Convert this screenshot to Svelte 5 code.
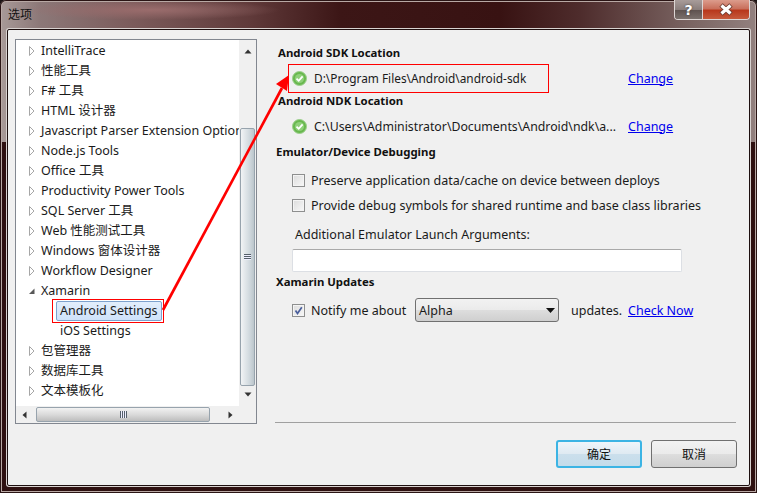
<script lang="ts">
  const treeItems = [
    { label: "IntelliTrace", arrow: "closed" },
    { label: "性能工具", arrow: "closed" },
    { label: "F# 工具", arrow: "closed" },
    { label: "HTML 设计器", arrow: "closed" },
    { label: "Javascript Parser Extension Options", arrow: "closed" },
    { label: "Node.js Tools", arrow: "closed" },
    { label: "Office 工具", arrow: "closed" },
    { label: "Productivity Power Tools", arrow: "closed" },
    { label: "SQL Server 工具", arrow: "closed" },
    { label: "Web 性能测试工具", arrow: "closed" },
    { label: "Windows 窗体设计器", arrow: "closed" },
    { label: "Workflow Designer", arrow: "closed" },
    { label: "Xamarin", arrow: "open" },
    { label: "Android Settings", arrow: "none", child: true, selected: true },
    { label: "iOS Settings", arrow: "none", child: true },
    { label: "包管理器", arrow: "closed" },
    { label: "数据库工具", arrow: "closed" },
    { label: "文本模板化", arrow: "closed" },
  ];
</script>

<div class="window">
  <header class="titlebar">
    <span class="title">选项</span>
    <div class="caption">
      <span class="cap help">?</span>
      <span class="cap close">
        <svg width="16" height="13" viewBox="0 0 16 13">
          <path d="M3 2 13 11M13 2 3 11" fill="none" stroke="#6b3a30" stroke-width="5" />
          <path d="M3.5 2.5 12.5 10.5M12.5 2.5 3.5 10.5" fill="none" stroke="#fff" stroke-width="3.2" />
        </svg>
      </span>
    </div>
  </header>

  <main class="panel">
    <div class="top">
      <div class="tree">
        <div class="tree-body">
          <ul class="rows">
            {#each treeItems as item}
              <li class="row" class:child={item.child}>
                {#if item.arrow === "closed"}
                  <svg class="arrow" width="7" height="10" viewBox="0 0 7 10"><path d="M1.5.5 6 5 1.5 9.5Z" fill="#fff" stroke="#a6a6a6" /></svg>
                {:else if item.arrow === "open"}
                  <svg class="arrow" width="7" height="10" viewBox="0 0 7 10"><path d="M6.5 2.5V8H1Z" fill="#595959" /></svg>
                {/if}
                <span class="label" class:selected={item.selected}>{item.label}</span>
              </li>
            {/each}
          </ul>
          <div class="vscroll">
            <span class="sb-btn"><svg width="8" height="5" viewBox="0 0 8 5"><path d="M4 .5 7.5 4.5H.5Z" fill="#333" /></svg></span>
            <div class="v-track"><div class="v-thumb"><span class="v-grip"></span></div></div>
            <span class="sb-btn"><svg width="8" height="5" viewBox="0 0 8 5"><path d="M.5.5H7.5L4 4.5Z" fill="#333" /></svg></span>
          </div>
        </div>
        <div class="hscroll">
          <span class="sb-btn"><svg width="5" height="8" viewBox="0 0 5 8"><path d="M4.5.5V7.5L.5 4Z" fill="#333" /></svg></span>
          <div class="h-track"><div class="h-thumb"><span class="h-grip"></span></div></div>
          <span class="sb-btn"><svg width="5" height="8" viewBox="0 0 5 8"><path d="M.5.5 4.5 4 .5 7.5Z" fill="#333" /></svg></span>
        </div>
      </div>

      <section class="settings">
        <h2 class="head sdk">Android SDK Location</h2>
        <div class="path-row">
          <svg class="ok" width="15" height="15" viewBox="0 0 15 15">
            <circle cx="7.5" cy="7.5" r="7" fill="#68b84e" stroke="#9ccf8c" />
            <circle cx="7.5" cy="7.5" r="4.6" fill="#8fd07a" />
            <path d="M4.5 7.6 6.7 9.8 10.6 5.4" fill="none" stroke="#fff" stroke-width="1.8" />
          </svg>
          <span class="path sdk-path">D:\Program Files\Android\android-sdk</span>
          <a class="link" href="#sdk">Change</a>
        </div>
        <h2 class="head sdk">Android NDK Location</h2>
        <div class="path-row">
          <svg class="ok" width="15" height="15" viewBox="0 0 15 15">
            <circle cx="7.5" cy="7.5" r="7" fill="#68b84e" stroke="#9ccf8c" />
            <circle cx="7.5" cy="7.5" r="4.6" fill="#8fd07a" />
            <path d="M4.5 7.6 6.7 9.8 10.6 5.4" fill="none" stroke="#fff" stroke-width="1.8" />
          </svg>
          <span class="path">C:\Users\Administrator\Documents\Android\ndk\a...</span>
          <a class="link" href="#ndk">Change</a>
        </div>
        <h2 class="head emulator">Emulator/Device Debugging</h2>
        <div class="check-row first"><span class="box"></span>Preserve application data/cache on device between deploys</div>
        <div class="check-row"><span class="box"></span>Provide debug symbols for shared runtime and base class libraries</div>
        <div class="args-label">Additional Emulator Launch Arguments:</div>
        <div class="args-input"></div>
        <h2 class="head updates">Xamarin Updates</h2>
        <div class="notify">
          <span class="box checked">
            <svg width="9" height="9" viewBox="0 0 9 9"><path d="M1.5 4.5 3.5 7.5 7.8 1.2" fill="none" stroke="#4a5f9c" stroke-width="1.7" /></svg>
          </span>
          <span class="notify-label">Notify me about</span>
          <div class="select">
            <span>Alpha</span>
            <svg width="9" height="5" viewBox="0 0 9 5"><path d="M0 0H9L4.5 5Z" fill="#111" /></svg>
          </div>
          <span class="updates-label">updates.</span>
          <a class="link" href="#check">Check Now</a>
        </div>
      </section>
    </div>

    <footer class="footer">
      <div class="actions">
        <button class="btn primary">确定</button>
        <button class="btn">取消</button>
      </div>
    </footer>
  </main>

  <!-- red annotations drawn on top of the screenshot -->
  <div class="mark mark-sdk"></div>
  <div class="mark mark-tree"></div>
  <svg class="pointer" width="757" height="493" viewBox="0 0 757 493">
    <path d="M163 310 282 88" fill="none" stroke="#f00" stroke-width="2.7" />
    <path d="M289 75 276 84 287 91Z" fill="#f00" />
  </svg>
</div>

<style>
  :global(body) {
    margin: 0;
    background: #1c1414;
  }

  .window {
    position: relative;
    display: flex;
    flex-direction: column;
    width: 757px;
    height: 493px;
    box-sizing: border-box;
    padding: 0 7px 7px;
    overflow: hidden;
    border-radius: 6px 6px 0 0;
    box-shadow: inset 0 0 0 1px #2a1414, inset 0 0 0 2px #b8a8a4;
    background:
      linear-gradient(transparent 142px, #2e1010 142px),
      radial-gradient(ellipse 130px 10px at 150px 10px, #9a6c6c, transparent),
      linear-gradient(90deg, #a89a98 0, #8c7878 40px, #7c5c5c 130px, #603a3a 250px, #3c1616 340px, #381212 500px, #4e2c2c 580px, #7a6462 690px, #93817f 757px);
    font-family: "Noto Sans", "Noto Sans CJK SC", sans-serif;
    font-size: 12.5px;
    color: #1a1a1a;
  }

  .titlebar {
    display: flex;
    justify-content: space-between;
    height: 29px;
    flex-shrink: 0;
  }

  .title {
    padding: 6px 0 0 1px;
    font-size: 12px;
    line-height: 18px;
    color: #111;
  }

  .caption {
    display: flex;
    height: 20px;
    border: 1px solid #ddd6d4;
    border-top: 0;
    border-radius: 0 0 4px 4px;
    overflow: hidden;
    box-sizing: border-box;
  }

  .cap {
    display: flex;
    align-items: center;
    justify-content: center;
    font-family: "DejaVu Sans", sans-serif;
    font-size: 14px;
    font-weight: 700;
    color: #fff;
    text-shadow: 0 0 2px #333;
  }

  .help {
    width: 27px;
    background: linear-gradient(#a89c9a 0, #8a7e7c 50%, #5f5350 55%, #7a706c 100%);
    border-right: 1px solid #ddd6d4;
  }

  .close {
    width: 46px;
    background: linear-gradient(#dc9c8c 0, #c9705c 45%, #b8381c 55%, #c65a3c 100%);
  }

  .panel {
    flex: 1;
    display: flex;
    flex-direction: column;
    border: 1px solid #1d0f0f;
    border-radius: 2px;
    background: #f0f0f0;
    box-shadow: 0 0 0 1px #d8d2d0;
    min-height: 0;
  }

  .top {
    display: flex;
    height: 392px;
    padding-left: 7px;
  }

  .tree {
    display: flex;
    flex-direction: column;
    width: 242px;
    height: 385px;
    margin-top: 9px;
    box-sizing: border-box;
    border: 1px solid #828790;
    background: #fff;
    flex-shrink: 0;
  }

  .tree-body {
    flex: 1;
    display: flex;
    min-height: 0;
  }

  .rows {
    flex: 1;
    margin: 0;
    padding: 1px 0 0;
    list-style: none;
    overflow: hidden;
    min-width: 0;
  }

  .row {
    display: flex;
    align-items: center;
    height: 20px;
    padding-left: 12px;
    line-height: 20px;
    white-space: nowrap;
  }

  .row.child {
    padding-left: 44px;
  }

  .arrow {
    width: 7px;
    margin-right: 6px;
    flex-shrink: 0;
  }

  .label.selected {
    margin-left: -4px;
    padding: 0 3px;
    height: 18px;
    line-height: 18px;
    border: 1px solid #7da2ce;
    border-radius: 2px;
    background: linear-gradient(#e2eefc, #cfe2fa);
  }

  .vscroll {
    display: flex;
    flex-direction: column;
    width: 17px;
    padding: 3px 0;
    box-sizing: border-box;
    flex-shrink: 0;
    background: #f0f0f0;
  }

  .sb-btn {
    display: flex;
    align-items: center;
    justify-content: center;
    width: 17px;
    height: 17px;
    flex-shrink: 0;
  }

  .v-track {
    flex: 1;
    display: flex;
    flex-direction: column;
    justify-content: flex-end;
  }

  .v-thumb {
    display: flex;
    align-items: center;
    justify-content: center;
    height: 256px;
    margin: 0 1px;
    border: 1px solid #97a3ad;
    border-radius: 2px;
    background: linear-gradient(90deg, #f2f4f5, #d3dbe0 60%, #bcc6cc);
  }

  .v-grip {
    width: 7px;
    height: 6px;
    background: repeating-linear-gradient(#55606a 0 1px, #eef 1px 2px);
  }

  .hscroll {
    display: flex;
    height: 17px;
    flex-shrink: 0;
    padding-right: 17px;
    background: #f0f0f0;
  }

  .h-track {
    flex: 1;
    display: flex;
    padding-left: 3px;
  }

  .h-thumb {
    display: flex;
    align-items: center;
    justify-content: center;
    width: 174px;
    margin: 1px 0;
    box-sizing: border-box;
    border: 1px solid #97a3ad;
    border-radius: 2px;
    background: linear-gradient(#f2f2f2, #d8d8d8 55%, #bdbdbd);
  }

  .h-grip {
    width: 7px;
    height: 7px;
    background: repeating-linear-gradient(90deg, #55606a 0 1px, #eef 1px 2px);
  }

  .settings {
    flex: 1;
    padding: 13px 0 0 19px;
    min-width: 0;
  }

  .head {
    margin: 0;
    height: 20px;
    font-size: 11.4px;
    line-height: 20px;
    font-weight: 700;
    color: #111;
  }

  .head.sdk {
    margin-left: 2px;
  }

  .head.emulator {
    margin-top: 3px;
  }

  .path-row {
    display: flex;
    align-items: center;
    height: 28px;
    box-sizing: border-box;
    padding: 2px 0 0 16px;
  }

  .ok {
    flex-shrink: 0;
    margin-right: 7px;
  }

  .path {
    width: 314px;
    font-size: 12.3px;
    white-space: nowrap;
    overflow: hidden;
  }

  .sdk-path {
    font-size: 11.85px;
  }

  .link {
    color: #0000ee;
    text-decoration: underline;
  }

  .check-row {
    display: flex;
    align-items: center;
    gap: 6px;
    height: 25px;
    padding-left: 16px;
    white-space: nowrap;
  }

  .check-row.first {
    margin-top: 6px;
  }

  .box {
    display: flex;
    align-items: center;
    justify-content: center;
    width: 13px;
    height: 13px;
    box-sizing: border-box;
    border: 1px solid #8e8f8f;
    background: linear-gradient(135deg, #dcdcdc, #f8f8f8);
    box-shadow: inset 0 0 0 1px #f4f4f4;
    flex-shrink: 0;
  }

  .args-label {
    height: 20px;
    line-height: 20px;
    margin-top: 7px;
    padding-left: 19px;
  }

  .args-input {
    width: 390px;
    height: 23px;
    margin: 4px 0 0 16px;
    box-sizing: border-box;
    border: 1px solid #dcdfe4;
    border-top-color: #a9a9a9;
    border-radius: 2px;
    background: #fff;
  }

  .head.updates {
    margin-top: 0;
  }

  .notify {
    display: flex;
    align-items: center;
    height: 24px;
    margin-top: 6px;
    padding-left: 16px;
    white-space: nowrap;
  }

  .notify-label {
    margin-left: 6px;
    width: 104px;
  }

  .select {
    display: flex;
    align-items: center;
    justify-content: space-between;
    width: 144px;
    height: 24px;
    padding: 0 3px;
    box-sizing: border-box;
    border: 1px solid #707070;
    border-radius: 3px;
    background: linear-gradient(#f2f2f2 0, #ebebeb 48%, #dddddd 52%, #cfcfcf 100%);
  }

  .updates-label {
    width: 57px;
    margin-left: 12px;
  }

  .footer {
    flex: 1;
    padding: 0 14px 0 267px;
  }

  .actions {
    display: flex;
    justify-content: flex-end;
    gap: 9px;
    margin-right: -2px;
    padding-top: 17px;
    border-top: 1px solid #a0a0a0;
    border-image: linear-gradient(90deg, #a0a0a0 calc(100% - 2px), transparent 0) 1;
  }

  .btn {
    width: 86px;
    height: 28px;
    padding: 0;
    box-sizing: border-box;
    border: 1px solid #707070;
    border-radius: 3px;
    background: linear-gradient(#f2f2f2 0, #ebebeb 48%, #dddddd 52%, #cfcfcf 100%);
    font: inherit;
    font-size: 12px;
    color: #111;
  }

  .btn.primary {
    border: 2px solid #3cb4e4;
    background: linear-gradient(#eef5fa 0, #dfeaf2 48%, #cbdfec 52%, #c4dcea 100%);
  }

  .mark {
    position: absolute;
    border: 1px solid #f00;
    box-sizing: border-box;
    pointer-events: none;
  }

  .mark-sdk {
    left: 288px;
    top: 64px;
    width: 261px;
    height: 29px;
  }

  .mark-tree {
    left: 52px;
    top: 299px;
    width: 112px;
    height: 24px;
  }

  .pointer {
    position: absolute;
    left: 0;
    top: 0;
    pointer-events: none;
  }
</style>
